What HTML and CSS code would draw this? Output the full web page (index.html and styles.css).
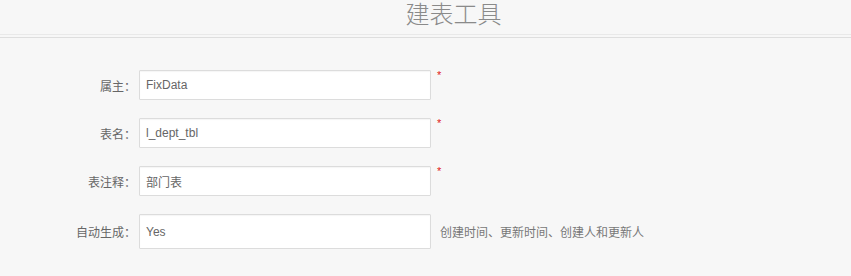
FILE: index.html
```html
<!DOCTYPE html>
<html lang="zh-CN">
<head>
<meta charset="utf-8">
<title>建表工具</title>
<link rel="stylesheet" href="styles.css">
</head>
<body>
<header class="header">
  <h1 class="title">建表工具</h1>
</header>
<div class="divider"></div>
<form class="form">
  <div class="row">
    <label class="label">属主：</label>
    <input class="field" type="text" value="FixData" readonly>
    <span class="req">*</span>
  </div>
  <div class="row">
    <label class="label">表名：</label>
    <input class="field" type="text" value="l_dept_tbl" readonly>
    <span class="req">*</span>
  </div>
  <div class="row">
    <label class="label">表注释：</label>
    <input class="field" type="text" value="部门表" readonly>
    <span class="req">*</span>
  </div>
  <div class="row">
    <label class="label">自动生成：</label>
    <input class="field field-tall" type="text" value="Yes" readonly>
    <span class="hint">创建时间、更新时间、创建人和更新人</span>
  </div>
</form>
</body>
</html>
```

FILE: styles.css
```css
html, body {
  margin: 0;
  padding: 0;
}
body {
  background: #f7f7f7;
  font-family: "Liberation Sans", "Noto Sans CJK SC", sans-serif;
  font-size: 12px;
  color: #666;
}
.header {
  border-bottom: 1px solid #e9e9e9;
  background: #f7f7f7;
}
.title {
  margin: 0;
  padding: 1px 0 5px 56px;
  text-align: center;
  font-family: "Liberation Sans", "Noto Sans CJK SC", sans-serif;
  font-weight: 300;
  font-size: 24px;
  line-height: 28px;
  color: #8a8a8a;
}
.divider {
  margin-top: 2px;
  border-top: 1px solid #dedede;
}
.form {
  padding-top: 32px;
}
.row {
  display: flex;
  align-items: center;
  margin-bottom: 18px;
}
.label {
  width: 136px;
  text-align: right;
  font-family: "Noto Sans CJK SC", sans-serif;
  font-size: 12px;
  color: #666;
  margin-right: 3px;
}
.field {
  box-sizing: border-box;
  width: 292px;
  height: 30px;
  margin: 0;
  padding: 0 6px;
  border: 1px solid #dcdcdc;
  border-radius: 1px;
  background: #fff;
  box-shadow: inset 0 1px 1px rgba(0, 0, 0, 0.04);
  font-family: "Liberation Sans", "Noto Sans CJK SC", sans-serif;
  font-size: 12px;
  color: #666;
  outline: none;
}
.field-tall {
  height: 35px;
}
.req {
  align-self: flex-start;
  margin-left: 6px;
  font-size: 11px;
  line-height: 10px;
  color: #e02020;
}
.hint {
  margin-left: 9px;
  font-family: "Noto Sans CJK SC", sans-serif;
  font-size: 12px;
  color: #777;
}
```
